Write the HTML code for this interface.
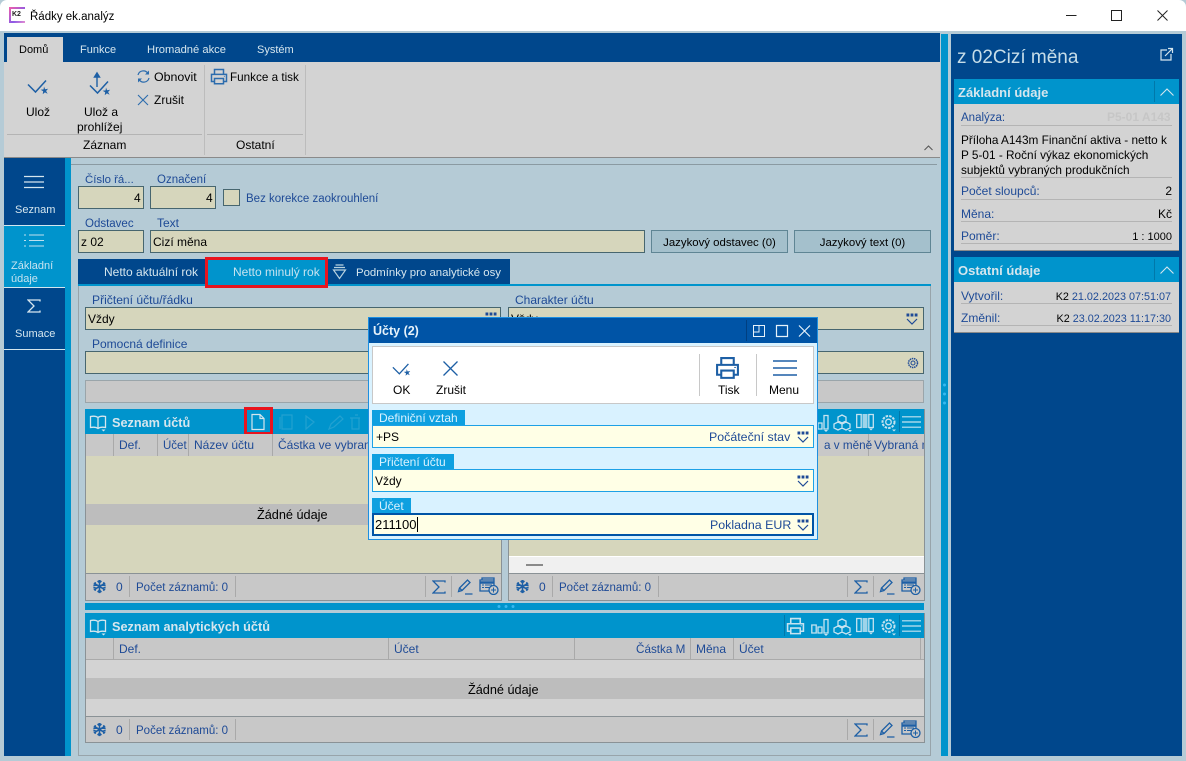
<!DOCTYPE html>
<html lang="cs"><head><meta charset="utf-8"><title>Řádky ek.analýz</title>
<style>
html,body{margin:0;padding:0;width:1186px;height:761px;overflow:hidden;background:#b5cbd6}
body{position:relative;font:12px/16px "Liberation Sans",sans-serif;color:#000}
.a{position:absolute;box-sizing:border-box}
.t{position:absolute;white-space:nowrap;line-height:16px;height:16px}
.l{color:#1e4a96}
.w{color:#d5e6ee}
.b{font-weight:bold}
.s{font-size:11.5px;margin-top:1px}
.inp{position:absolute;box-sizing:border-box;background:#d6d6bc;border:1px solid #47666f}
.hdr{position:absolute;box-sizing:border-box;background:#0094cc}
.sep{position:absolute;width:1px;background:#a9a9a9}
.line{position:absolute;height:1px;background:#b4b4b4}
svg{position:absolute;overflow:visible;fill:none}
</style></head><body>
<svg width="0" height="0" style="position:absolute">
<defs>
<symbol id="dd" viewBox="0 0 12 12"><path d="M1 6l5 5 5-5" fill="none" stroke="currentColor" stroke-width="1.200"/><path d="M.5 .5h2.800v3H.5zM4.600 .5h2.800v3H4.600zM8.700 .5h2.800v3H8.700z" fill="currentColor"/></symbol>
<symbol id="book" viewBox="0 0 18 18"><path d="M9 3.500C7 2 4 2 1.500 2.500v11C4 13 7 13 9 14.500c2-1.500 5-1.500 7.500-1v-11C14 2 11 2 9 3.500zM9 3.500v11" fill="none" stroke="currentColor" stroke-width="1.300"/><path d="M12.500 15.500h4l-2 2z" fill="currentColor"/></symbol>
<symbol id="printer" viewBox="0 0 24 24"><path d="M6 8V2h12v6M6 18H2V8.500h20V18h-4M6 14h12v7H6z" fill="none" stroke="currentColor" stroke-width="2"/><path d="M18.500 11h1.500" stroke="currentColor" stroke-width="1"/></symbol>
<symbol id="chart" viewBox="0 0 18 18"><path d="M.8 7h4.400v8H.8zM7 9h4v6H7zM13 1.500h4V15h-4z" fill="none" stroke="currentColor" stroke-width="1.300"/><path d="M13 16h4l-2 2z" fill="currentColor"/></symbol>
<symbol id="cubes" viewBox="0 0 20 18"><path d="M9 1l4 2v4l-4 2-4-2V3zM5 8l4 2v4l-4 2-4-2v-4zM13 8l4 2v4l-4 2-4-2v-4z" fill="none" stroke="currentColor" stroke-width="1.300"/><path d="M15 16h4l-2 2z" fill="currentColor"/></symbol>
<symbol id="cols" viewBox="0 0 18 18"><path d="M.7 1.500h4.500v13H.7zM12.800 1.500h4.500v13h-4.500z" fill="none" stroke="currentColor" stroke-width="1.300"/><path d="M6.500 1h5v14h-5z" fill="currentColor" opacity=".8"/><path d="M13 15.500h4l-2 2z" fill="currentColor"/></symbol>
<symbol id="gear" viewBox="0 0 18 18"><circle cx="8.500" cy="8" r="6" fill="none" stroke="currentColor" stroke-width="2" stroke-dasharray="2.500 1.100"/><circle cx="8.500" cy="8" r="2.800" fill="none" stroke="currentColor" stroke-width="1.300"/><path d="M12 15.500h4l-2 2z" fill="currentColor"/></symbol>
<symbol id="menu" viewBox="0 0 20 14"><path d="M0 1.500h20M0 7h20M0 12.500h20" fill="none" stroke="currentColor" stroke-width="1.200"/></symbol>
<symbol id="snow" viewBox="0 0 16 16"><path d="M8 1v14M2 4.500l12 7M14 4.500l-12 7M6 2l2 2 2-2M6 14l2-2 2 2M1.500 7l2.500-.8-.8-2.700M14.500 7L12 6.200l.8-2.700M1.500 9l2.500.8-.8 2.700M14.500 9l-2.500.8.8 2.700" fill="none" stroke="currentColor" stroke-width="1.700"/></symbol>
<symbol id="sigma" viewBox="0 0 14 14"><path d="M13 2.500V1H1l6 6-6 6h12v-1.500" fill="none" stroke="currentColor" stroke-width="1.300"/></symbol>
<symbol id="pen" viewBox="0 0 16 16"><path d="M1.500 12.500l1-3.500L10.500 1 13 3.500 5 11.500zM2.500 9l2.500 2.500M8 15h7.500" fill="none" stroke="currentColor" stroke-width="1.300"/></symbol>
<symbol id="addlist" viewBox="0 0 20 18"><path d="M3 3V1h12v2M1 3h14v11H1z" fill="none" stroke="currentColor" stroke-width="1.300"/><path d="M1 5.500h14" stroke="currentColor" stroke-width="2.500"/><path d="M3 8h2M6 8h7M3 10.500h2M6 10.500h5" stroke="currentColor" stroke-width="1"/><circle cx="14.500" cy="13" r="4.500" fill="#c8c8c8" stroke="currentColor" stroke-width="1.300"/><path d="M12 13h5M14.500 10.500v5" stroke="currentColor" stroke-width="1"/></symbol>
<symbol id="check" viewBox="0 0 22 16"><path d="M1 5.500l7.500 7.500L19 1.500" fill="none" stroke="currentColor" stroke-width="1.500"/><path d="M17 7.500l1.100 2.800 3-.5-2 2.200 1.500 2.700-2.700-1.300-2.200 1.900.5-3-2.600-1.500 3-.4z" fill="currentColor"/></symbol>
</defs></svg>

<!-- title bar -->
<div class="a" style="left:0;top:0;width:1186px;height:31px;background:#fff;border-radius:7px 7px 0 0"></div>
<div class="a" style="left:9px;top:7px;width:16px;height:16px;background:linear-gradient(135deg,#f35ea8,#8b5ae6 60%,#e88fd0)"></div>
<div class="a" style="left:11px;top:9px;width:14px;height:12px;background:#fff"></div>
<div class="t b" style="left:12px;top:7px;font-size:7px;color:#222">K2</div>
<div class="t" style="left:30px;top:9px;font-size:11.500px">Řádky ek.analýz</div>
<svg style="left:1066px;top:10px" width="102" height="11"><path d="M0 5.500h10.500M45.500 .5h10v10h-10zM91.500 .5l10 10M101.500 .5l-10 10" stroke="#222" stroke-width="1"/></svg>

<!-- main frame -->
<div class="a" style="left:4px;top:33px;width:936px;height:29px;background:#00478c"></div>
<div class="a" style="left:7px;top:37px;width:56px;height:25px;background:#d3d3d3"></div>
<div class="t" style="left:19px;top:42px;font-size:11px">Domů</div>
<div class="t w" style="left:80px;top:42px;font-size:11px">Funkce</div>
<div class="t w" style="left:147px;top:42px;font-size:11.200px">Hromadné akce</div>
<div class="t w" style="left:257px;top:42px;font-size:11px">Systém</div>
<div class="a" style="left:4px;top:62px;width:936px;height:96px;background:#d3d3d3;border-bottom:1px solid #8a8a8a"></div>
<div class="sep" style="left:204px;top:65px;height:90px;background:#bcbcbc"></div>
<div class="sep" style="left:305px;top:65px;height:90px;background:#bcbcbc"></div>
<div class="line" style="left:7px;top:134px;width:195px;background:#b4b4b4"></div>
<div class="line" style="left:207px;top:134px;width:96px;background:#b4b4b4"></div>
<svg style="left:27px;top:79px;color:#1d5fa5" width="22" height="16"><use href="#check" width="22" height="16"/></svg>
<div class="t" style="left:26px;top:104px">Ulož</div>
<svg style="left:89px;top:80px;color:#1d5fa5" width="22" height="16"><use href="#check" width="22" height="16"/></svg>
<svg style="left:93px;top:72px" width="8" height="15"><path d="M4 15V2M1.500 5l2.500-4 2.500 4z" stroke="#1d5fa5" stroke-width="1.400" fill="#1d5fa5"/></svg>
<div class="t" style="left:84px;top:104px">Ulož a</div>
<div class="t" style="left:77px;top:119px">prohlížej</div>
<svg style="left:137px;top:70px" width="13" height="13"><path d="M1 5A5.500 5.500 0 0 1 11 3.500M12 8A5.500 5.500 0 0 1 2 9.500" stroke="#2c6cad" stroke-width="1.200"/><path d="M12 .5v4H8zM1 12.500v-4h4z" fill="#2c6cad"/></svg>
<div class="t" style="left:154px;top:69px;font-size:12.400px">Obnovit</div>
<svg style="left:137px;top:94px" width="12" height="12"><path d="M1 1l10 10M11 1L1 11" stroke="#2c6cad" stroke-width="1.100"/></svg>
<div class="t" style="left:154px;top:92px">Zrušit</div>
<svg style="left:210px;top:68px;color:#2c6cad" width="18" height="18"><use href="#printer" width="18" height="18"/></svg>
<div class="t" style="left:230px;top:70px;font-size:11.700px">Funkce a tisk</div>
<div class="t" style="left:83px;top:137px">Záznam</div>
<div class="t" style="left:236px;top:137px">Ostatní</div>
<svg style="left:924px;top:145px" width="9" height="6"><path d="M.5 5l4-4 4 4" stroke="#555"/></svg>

<!-- left nav -->
<div class="a" style="left:4px;top:158px;width:61px;height:598px;background:#00478c"></div>
<div class="a" style="left:65px;top:158px;width:6px;height:598px;background:#0094cc"></div>
<div class="a" style="left:71px;top:164px;width:866px;height:592px;background:#b5cbd6;border-top:1px solid #8a9aa2"></div>
<div class="a" style="left:4px;top:225px;width:61px;height:1px;background:#d3e6ee"></div>
<div class="a" style="left:4px;top:226px;width:61px;height:61px;background:#0094cc"></div>
<div class="a" style="left:4px;top:287px;width:61px;height:1px;background:#d3e6ee"></div>
<div class="a" style="left:4px;top:349px;width:61px;height:1px;background:#d3e6ee"></div>
<svg style="left:24px;top:174px;color:#d5e6ee" width="20" height="16"><use href="#menu" width="20" height="16"/></svg>
<div class="t w" style="left:15px;top:202px;font-size:11px">Seznam</div>
<svg style="left:24px;top:234px" width="20" height="13"><path d="M0 1h2M5 1h15M0 6.500h2M5 6.500h15M0 12h2M5 12h15" stroke="#bfe0ee" stroke-width="1"/></svg>
<div class="t" style="left:11px;top:258px;font-size:11px;color:#c6e3f0">Základní</div>
<div class="t" style="left:11px;top:271px;font-size:11px;color:#c6e3f0">údaje</div>
<svg style="left:27px;top:299px;color:#d5e6ee" width="14" height="14"><use href="#sigma" width="14" height="14"/></svg>
<div class="t w" style="left:15px;top:326px;font-size:11px">Sumace</div>

<!-- form -->
<div class="t l" style="left:85px;top:172px;font-size:11.400px">Číslo řá...</div>
<div class="t l s" style="left:157px;top:171px">Označení</div>
<div class="inp" style="left:78px;top:186px;width:66px;height:23px"></div>
<div class="t" style="left:134px;top:190px">4</div>
<div class="inp" style="left:150px;top:186px;width:66px;height:23px"></div>
<div class="t" style="left:206px;top:190px">4</div>
<div class="inp" style="left:223px;top:189px;width:17px;height:17px"></div>
<div class="t l s" style="left:246px;top:190px">Bez korekce zaokrouhlení</div>
<div class="t l s" style="left:85px;top:215px">Odstavec</div>
<div class="t l" style="left:157px;top:215px">Text</div>
<div class="inp" style="left:78px;top:230px;width:66px;height:23px"></div>
<div class="t" style="left:81px;top:234px">z 02</div>
<div class="inp" style="left:150px;top:230px;width:495px;height:23px"></div>
<div class="t" style="left:153px;top:234px">Cizí měna</div>
<div class="a" style="left:651px;top:230px;width:137px;height:23px;background:#a4c0cc;border:1px solid #5f8594"></div>
<div class="t" style="left:651px;width:137px;text-align:center;top:235px;font-size:11.400px">Jazykový odstavec (0)</div>
<div class="a" style="left:794px;top:230px;width:137px;height:23px;background:#a4c0cc;border:1px solid #5f8594"></div>
<div class="t" style="left:794px;width:137px;text-align:center;top:235px;font-size:11.400px">Jazykový text (0)</div>

<!-- tabs -->
<div class="a" style="left:78px;top:259px;width:432px;height:25px;background:#00478c"></div>
<div class="a" style="left:78px;top:284px;width:853px;height:2px;background:#0094cc"></div>
<div class="a" style="left:78px;top:286px;width:853px;height:470px;border:1px solid #98a4aa;border-top:0"></div>
<div class="a" style="left:205px;top:257px;width:123px;height:31px;background:#0094cc;border:3px solid #e8141e"></div>
<div class="t w" style="left:104px;top:264px">Netto aktuální rok</div>
<div class="t" style="left:233px;top:264px;color:#c6e3f0">Netto minulý rok</div>
<svg style="left:333px;top:264px" width="13" height="15"><path d="M2.500 1h8M1 3.500h11" stroke="#b8d2df" stroke-width="1.200"/><path d="M.5 6h12l-6 8.500z" stroke="#b8d2df" stroke-width="1.200"/></svg>
<div class="t w" style="left:356px;top:265px;font-size:11.400px">Podmínky pro analytické osy</div>

<div class="t l" style="left:92px;top:292px;font-size:12.100px">Přičtení účtu/řádku</div>
<div class="inp" style="left:85px;top:307px;width:416px;height:23px"></div>
<div class="t" style="left:88px;top:311px">Vždy</div>
<svg style="left:485px;top:312px;color:#1e4a96" width="12" height="12"><use href="#dd" width="12" height="12"/></svg>
<div class="t l" style="left:515px;top:292px">Charakter účtu</div>
<div class="inp" style="left:508px;top:307px;width:416px;height:23px"></div>
<div class="t" style="left:511px;top:311px">Vždy</div>
<svg style="left:906px;top:313px;color:#1e4a96" width="12" height="12"><use href="#dd" width="12" height="12"/></svg>
<div class="t l" style="left:92px;top:336px">Pomocná definice</div>
<div class="inp" style="left:85px;top:351px;width:839px;height:23px"></div>
<svg style="left:907px;top:357px;color:#1e4a96" width="12" height="12"><circle cx="6" cy="6" r="4.500" stroke="currentColor" stroke-width="1.500" stroke-dasharray="1.500 .7"/><circle cx="6" cy="6" r="2" stroke="currentColor"/></svg>
<div class="a" style="left:85px;top:380px;width:839px;height:23px;background:#c8c8c8;border:1px solid #9aa5aa"></div>

<!-- list 1 left -->
<div class="a" style="left:85px;top:409px;width:417px;height:192px;background:#d6d6bc;border:1px solid #8a9296;border-top:0"></div>
<div class="hdr" style="left:85px;top:409px;width:417px;height:25px"></div>
<svg style="left:89px;top:414px;color:#d5e6ee" width="18" height="18"><use href="#book" width="18" height="18"/></svg>
<div class="t b w" style="left:112px;top:415px;font-size:12.700px">Seznam účtů</div>
<div class="a" style="left:244px;top:407px;width:29px;height:28px;border:3px solid #e8141e"></div>
<svg style="left:251px;top:414px" width="14" height="16"><path d="M1 .5h8l4 4v11H1zM9 .5v4h4" stroke="#d5e6ee" stroke-width="1.200"/></svg>
<svg style="left:274px;top:414px;opacity:.16" width="95" height="17"><path d="M10 1h8v14h-10V1zM6 3v12M32 2l8 6-8 7zM55 15l2-5 9-8 3 3-9 8zM76 4h10M78 4v11h7V4M81 1h3" stroke="#d5e6ee" stroke-width="1.200"/></svg>
<div class="a" style="left:86px;top:434px;width:415px;height:22px;background:#c8c8c8"></div>
<div class="sep" style="left:113px;top:434px;height:22px"></div>
<div class="sep" style="left:157px;top:434px;height:22px"></div>
<div class="sep" style="left:188px;top:434px;height:22px"></div>
<div class="sep" style="left:272px;top:434px;height:22px"></div>
<div class="t l" style="left:119px;top:437px">Def.</div>
<div class="t l s" style="left:163px;top:437px">Účet</div>
<div class="t l" style="left:194px;top:437px">Název účtu</div>
<div class="t l" style="left:278px;top:437px">Částka ve vybran</div>
<div class="a" style="left:86px;top:504px;width:415px;height:21px;background:#bdbdbd"></div>
<div class="t" style="left:257px;top:507px;font-size:12.700px">Žádné údaje</div>
<div class="a" style="left:86px;top:573px;width:415px;height:27px;background:#c8c8c8;border-top:1px solid #8a9296"></div>

<!-- list 1 right -->
<div class="a" style="left:508px;top:409px;width:417px;height:192px;background:#d6d6bc;border:1px solid #8a9296;border-top:0"></div>
<div class="hdr" style="left:508px;top:409px;width:416px;height:25px"></div>
<div class="a" style="left:509px;top:434px;width:415px;height:22px;background:#c8c8c8"></div>
<div class="sep" style="left:868px;top:434px;height:22px"></div>
<div class="t l" style="left:824px;top:438px;font-size:11.700px">a v měně</div>
<div class="t l" style="left:874px;top:437px;width:50px;overflow:hidden">Vybraná m</div>
<div class="a" style="left:509px;top:556px;width:415px;height:17px;background:#f0f0f0;border-top:1px solid #fff"></div>
<div class="a" style="left:526px;top:564px;width:17px;height:2px;background:#8a8a8a"></div>
<div class="a" style="left:509px;top:573px;width:415px;height:27px;background:#c8c8c8;border-top:1px solid #8a9296"></div>

<!-- splitter -->
<div class="a" style="left:85px;top:603px;width:839px;height:7px;background:#0094cc"></div>
<svg style="left:496px;top:604px" width="20" height="5"><circle cx="3" cy="2.500" r="1.500" fill="#38b8f0"/><circle cx="10" cy="2.500" r="1.500" fill="#38b8f0"/><circle cx="17" cy="2.500" r="1.500" fill="#38b8f0"/></svg>

<!-- list 2 -->
<div class="a" style="left:85px;top:613px;width:840px;height:130px;background:#d3d3d3;border:1px solid #8a9296;border-top:0"></div>
<div class="hdr" style="left:85px;top:613px;width:839px;height:25px"></div>
<svg style="left:89px;top:618px;color:#d5e6ee" width="18" height="18"><use href="#book" width="18" height="18"/></svg>
<div class="t b w" style="left:112px;top:619px;font-size:12.700px">Seznam analytických účtů</div>
<div class="a" style="left:86px;top:638px;width:838px;height:22px;background:#c8c8c8;border-bottom:1px solid #aaa"></div>
<div class="sep" style="left:113px;top:638px;height:22px"></div>
<div class="sep" style="left:388px;top:638px;height:22px"></div>
<div class="sep" style="left:574px;top:638px;height:22px"></div>
<div class="sep" style="left:690px;top:638px;height:22px"></div>
<div class="sep" style="left:733px;top:638px;height:22px"></div>
<div class="sep" style="left:920px;top:638px;height:22px"></div>
<div class="t l" style="left:119px;top:641px">Def.</div>
<div class="t l" style="left:394px;top:641px">Účet</div>
<div class="t l" style="left:636px;top:642px;font-size:11.700px">Částka M</div>
<div class="t l" style="left:696px;top:641px">Měna</div>
<div class="t l" style="left:739px;top:641px">Účet</div>
<div class="a" style="left:86px;top:678px;width:838px;height:21px;background:#bdbdbd"></div>
<div class="t" style="left:468px;top:682px;font-size:12.700px">Žádné údaje</div>
<div class="a" style="left:86px;top:716px;width:838px;height:26px;background:#c8c8c8;border-top:1px solid #8a9296"></div>

<!-- footers -->
<svg style="left:92px;top:579px;color:#1d5fa5" width="15" height="15"><use href="#snow" width="15" height="15"/></svg>
<div class="t l" style="left:116px;top:579px">0</div><div class="sep" style="left:129px;top:576px;height:21px"></div>
<div class="t l s" style="left:136px;top:579px">Počet záznamů: 0</div><div class="sep" style="left:235px;top:576px;height:21px"></div>
<svg style="left:515px;top:579px;color:#1d5fa5" width="15" height="15"><use href="#snow" width="15" height="15"/></svg>
<div class="t l" style="left:539px;top:579px">0</div><div class="sep" style="left:552px;top:576px;height:21px"></div>
<div class="t l s" style="left:559px;top:579px">Počet záznamů: 0</div><div class="sep" style="left:658px;top:576px;height:21px"></div>
<svg style="left:92px;top:722px;color:#1d5fa5" width="15" height="15"><use href="#snow" width="15" height="15"/></svg>
<div class="t l" style="left:116px;top:722px">0</div><div class="sep" style="left:129px;top:719px;height:21px"></div>
<div class="t l s" style="left:136px;top:722px">Počet záznamů: 0</div><div class="sep" style="left:235px;top:719px;height:21px"></div>

<!-- footer right icons -->
<div class="sep" style="left:425px;top:576px;height:21px"></div><div class="sep" style="left:451px;top:576px;height:21px"></div>
<svg style="left:432px;top:580px;color:#1d5fa5" width="14" height="14"><use href="#sigma" width="14" height="14"/></svg>
<svg style="left:457px;top:579px;color:#1d5fa5" width="16" height="16"><use href="#pen" width="16" height="16"/></svg>
<svg style="left:479px;top:577px;color:#1d5fa5" width="20" height="18"><use href="#addlist" width="20" height="18"/></svg>
<div class="sep" style="left:847px;top:576px;height:21px"></div><div class="sep" style="left:873px;top:576px;height:21px"></div>
<svg style="left:854px;top:580px;color:#1d5fa5" width="14" height="14"><use href="#sigma" width="14" height="14"/></svg>
<svg style="left:879px;top:579px;color:#1d5fa5" width="16" height="16"><use href="#pen" width="16" height="16"/></svg>
<svg style="left:901px;top:577px;color:#1d5fa5" width="20" height="18"><use href="#addlist" width="20" height="18"/></svg>
<div class="sep" style="left:847px;top:719px;height:21px"></div><div class="sep" style="left:873px;top:719px;height:21px"></div>
<svg style="left:854px;top:723px;color:#1d5fa5" width="14" height="14"><use href="#sigma" width="14" height="14"/></svg>
<svg style="left:879px;top:722px;color:#1d5fa5" width="16" height="16"><use href="#pen" width="16" height="16"/></svg>
<svg style="left:901px;top:720px;color:#1d5fa5" width="20" height="18"><use href="#addlist" width="20" height="18"/></svg>

<!-- header tool icons -->
<svg style="left:811px;top:414px;color:#c6e3f0" width="18" height="18"><use href="#chart" width="18" height="18"/></svg>
<svg style="left:833px;top:414px;color:#c6e3f0" width="20" height="18"><use href="#cubes" width="20" height="18"/></svg>
<svg style="left:856px;top:413px;color:#c6e3f0" width="18" height="18"><use href="#cols" width="18" height="18"/></svg>
<svg style="left:880px;top:414px;color:#c6e3f0" width="18" height="18"><use href="#gear" width="18" height="18"/></svg>
<div class="sep" style="left:899px;top:411px;height:21px;background:#0078aa"></div>
<svg style="left:902px;top:415px;color:#c6e3f0" width="19" height="14"><use href="#menu" width="19" height="14"/></svg>
<div class="sep" style="left:784px;top:615px;height:21px;background:#0078aa"></div>
<svg style="left:786px;top:617px;color:#c6e3f0" width="19" height="19"><use href="#printer" width="19" height="19"/></svg>
<svg style="left:811px;top:618px;color:#c6e3f0" width="18" height="18"><use href="#chart" width="18" height="18"/></svg>
<svg style="left:833px;top:618px;color:#c6e3f0" width="20" height="18"><use href="#cubes" width="20" height="18"/></svg>
<svg style="left:856px;top:617px;color:#c6e3f0" width="18" height="18"><use href="#cols" width="18" height="18"/></svg>
<svg style="left:880px;top:618px;color:#c6e3f0" width="18" height="18"><use href="#gear" width="18" height="18"/></svg>
<div class="sep" style="left:899px;top:615px;height:21px;background:#0078aa"></div>
<svg style="left:902px;top:619px;color:#c6e3f0" width="19" height="14"><use href="#menu" width="19" height="14"/></svg>

<!-- dialog -->
<div class="a" style="left:368px;top:317px;width:450px;height:223px;background:#d9f2ff;border:1px solid #1e8fe0"></div>
<div class="a" style="left:369px;top:318px;width:448px;height:25px;background:#0054a6"></div>
<div class="t b" style="left:373px;top:323px;color:#e6f2fa;font-size:12.500px">Účty (2)</div>
<div class="sep" style="left:746px;top:320px;height:21px;background:#003f80"></div>
<svg style="left:753px;top:325px" width="60" height="12"><path d="M.5.500h11v11H.500zM.5 7H6V.5" stroke="#e6f2fa"/><path d="M23.500.5h11v11h-11z" stroke="#e6f2fa" stroke-width="1.200"/><path d="M46 .5l11 11M57 .5l-11 11" stroke="#e6f2fa" stroke-width="1.200"/></svg>
<div class="a" style="left:372px;top:346px;width:442px;height:58px;background:#fff;border:1px solid #c8c8c8"></div>
<svg style="left:392px;top:362px;color:#1d5fa5" width="19" height="15"><use href="#check" width="19" height="15"/></svg>
<div class="t" style="left:393px;top:382px">OK</div>
<svg style="left:443px;top:361px" width="15" height="15"><path d="M.5.500l14 14M14.500.5l-14 14" stroke="#1d5fa5" stroke-width="1.300"/></svg>
<div class="t" style="left:436px;top:382px">Zrušit</div>
<div class="sep" style="left:699px;top:354px;height:42px;background:#c8c8c8"></div>
<div class="sep" style="left:756px;top:354px;height:42px;background:#c8c8c8"></div>
<svg style="left:715px;top:356px;color:#1d5fa5" width="25" height="25"><use href="#printer" width="25" height="25"/></svg>
<div class="t" style="left:718px;top:382px">Tisk</div>
<svg style="left:773px;top:360px;color:#1d5fa5" width="24" height="16"><path d="M0 1h24M0 8h24M0 15h24" stroke="currentColor" stroke-width="1.500"/></svg>
<div class="t" style="left:769px;top:382px">Menu</div>

<div class="a" style="left:372px;top:410px;width:93px;height:16px;background:#0ea0e0"></div>
<div class="t" style="left:379px;top:410px;color:#d9f2ff">Definiční vztah</div>
<div class="a" style="left:372px;top:425px;width:442px;height:23px;background:#ffffe6;border:1px solid #1da1e6"></div>
<div class="t" style="left:376px;top:429px">+PS</div>
<div class="t l" style="left:709px;top:429px;font-size:12.400px">Počáteční stav</div>
<svg style="left:797px;top:431px;color:#1e4a96" width="12" height="12"><use href="#dd" width="12" height="12"/></svg>
<div class="a" style="left:372px;top:454px;width:82px;height:16px;background:#0ea0e0"></div>
<div class="t" style="left:379px;top:454px;color:#d9f2ff">Přičtení účtu</div>
<div class="a" style="left:372px;top:469px;width:442px;height:23px;background:#ffffe6;border:1px solid #1da1e6"></div>
<div class="t" style="left:375px;top:473px">Vždy</div>
<svg style="left:797px;top:475px;color:#1e4a96" width="12" height="12"><use href="#dd" width="12" height="12"/></svg>
<div class="a" style="left:372px;top:498px;width:39px;height:16px;background:#0ea0e0"></div>
<div class="t" style="left:379px;top:498px;color:#d9f2ff">Účet</div>
<div class="a" style="left:372px;top:513px;width:442px;height:23px;background:#ffffe6;border:2px solid #0054a6"></div>
<div class="t" style="left:375px;top:517px;font-size:13px">211100</div>
<div class="a" style="left:417px;top:517px;width:1px;height:15px;background:#000"></div>
<div class="t l" style="left:710px;top:517px;font-size:12.400px">Pokladna EUR</div>
<svg style="left:797px;top:519px;color:#1e4a96" width="12" height="12"><use href="#dd" width="12" height="12"/></svg>

<!-- right side -->
<div class="a" style="left:941px;top:34px;width:7px;height:722px;background:#0094cc"></div>
<svg style="left:942px;top:382px" width="5" height="26"><circle cx="2.500" cy="3" r="1.500" fill="#38b8f0"/><circle cx="2.500" cy="12" r="1.500" fill="#38b8f0"/><circle cx="2.500" cy="21" r="1.500" fill="#38b8f0"/></svg>
<div class="a" style="left:951px;top:34px;width:231px;height:722px;background:#00478c"></div>
<div class="t" style="left:957px;top:47px;font-size:19px;line-height:22px;height:22px;color:#c6dde8">z 02Cizí měna</div>
<svg style="left:1160px;top:48px" width="13" height="13"><path d="M7 2H1v10h10V6M5 8l7-7M8 .5h4.500V5" stroke="#d5e6ee" stroke-width="1.200"/></svg>

<div class="a" style="left:954px;top:104px;width:225px;height:147px;background:#d3d3d3;border-bottom:1px solid #8a8a8a"></div>
<div class="hdr" style="left:954px;top:79px;width:225px;height:25px"></div>
<div class="t b w" style="left:958px;top:85px;font-size:13px">Základní údaje</div>
<div class="sep" style="left:1154px;top:81px;height:21px;background:#0078aa"></div>
<svg style="left:1160px;top:88px" width="14" height="8"><path d="M.5 7.500L7 1l6.500 6.500" stroke="#d5e6ee" stroke-width="1.100"/></svg>
<div class="t l s" style="left:961px;top:109px">Analýza:</div>
<div class="t b" style="left:1107px;top:109px;color:#c6c6c6">P5-01 A143</div>
<div class="line" style="left:961px;top:125px;width:211px"></div>
<div class="t" style="left:961px;top:132px;font-size:11.800px">Příloha A143m Finanční aktiva - netto k</div>
<div class="t" style="left:961px;top:147px;font-size:11.800px">P 5-01 - Roční výkaz ekonomických</div>
<div class="t" style="left:961px;top:162px;font-size:11.800px">subjektů vybraných produkčních</div>
<div class="line" style="left:961px;top:177px;width:211px"></div>
<div class="t l" style="left:961px;top:183px">Počet sloupců:</div><div class="t" style="right:14px;top:183px">2</div>
<div class="line" style="left:961px;top:199px;width:211px"></div>
<div class="t l" style="left:961px;top:206px">Měna:</div><div class="t" style="right:14px;top:206px">Kč</div>
<div class="line" style="left:961px;top:221px;width:211px"></div>
<div class="t l" style="left:961px;top:228px">Poměr:</div><div class="t" style="right:14px;top:229px;font-size:11px">1 : 1000</div>
<div class="line" style="left:961px;top:243px;width:211px"></div>

<div class="a" style="left:954px;top:282px;width:225px;height:51px;background:#d3d3d3;border-bottom:1px solid #8a8a8a"></div>
<div class="hdr" style="left:954px;top:257px;width:225px;height:25px"></div>
<div class="t b w" style="left:958px;top:263px;font-size:13px">Ostatní údaje</div>
<div class="sep" style="left:1154px;top:259px;height:21px;background:#0078aa"></div>
<svg style="left:1160px;top:266px" width="14" height="8"><path d="M.5 7.500L7 1l6.500 6.500" stroke="#d5e6ee" stroke-width="1.100"/></svg>
<div class="t l" style="left:961px;top:288px">Vytvořil:</div>
<div class="t" style="right:15px;top:289px;font-size:10.800px"><span>K2</span> <span class="l">21.02.2023 07:51:07</span></div>
<div class="line" style="left:961px;top:303px;width:211px"></div>
<div class="t l" style="left:961px;top:310px">Změnil:</div>
<div class="t" style="right:15px;top:311px;font-size:10.800px"><span>K2</span> <span class="l">23.02.2023 11:17:30</span></div>
<div class="line" style="left:961px;top:325px;width:211px"></div>
</body></html>
